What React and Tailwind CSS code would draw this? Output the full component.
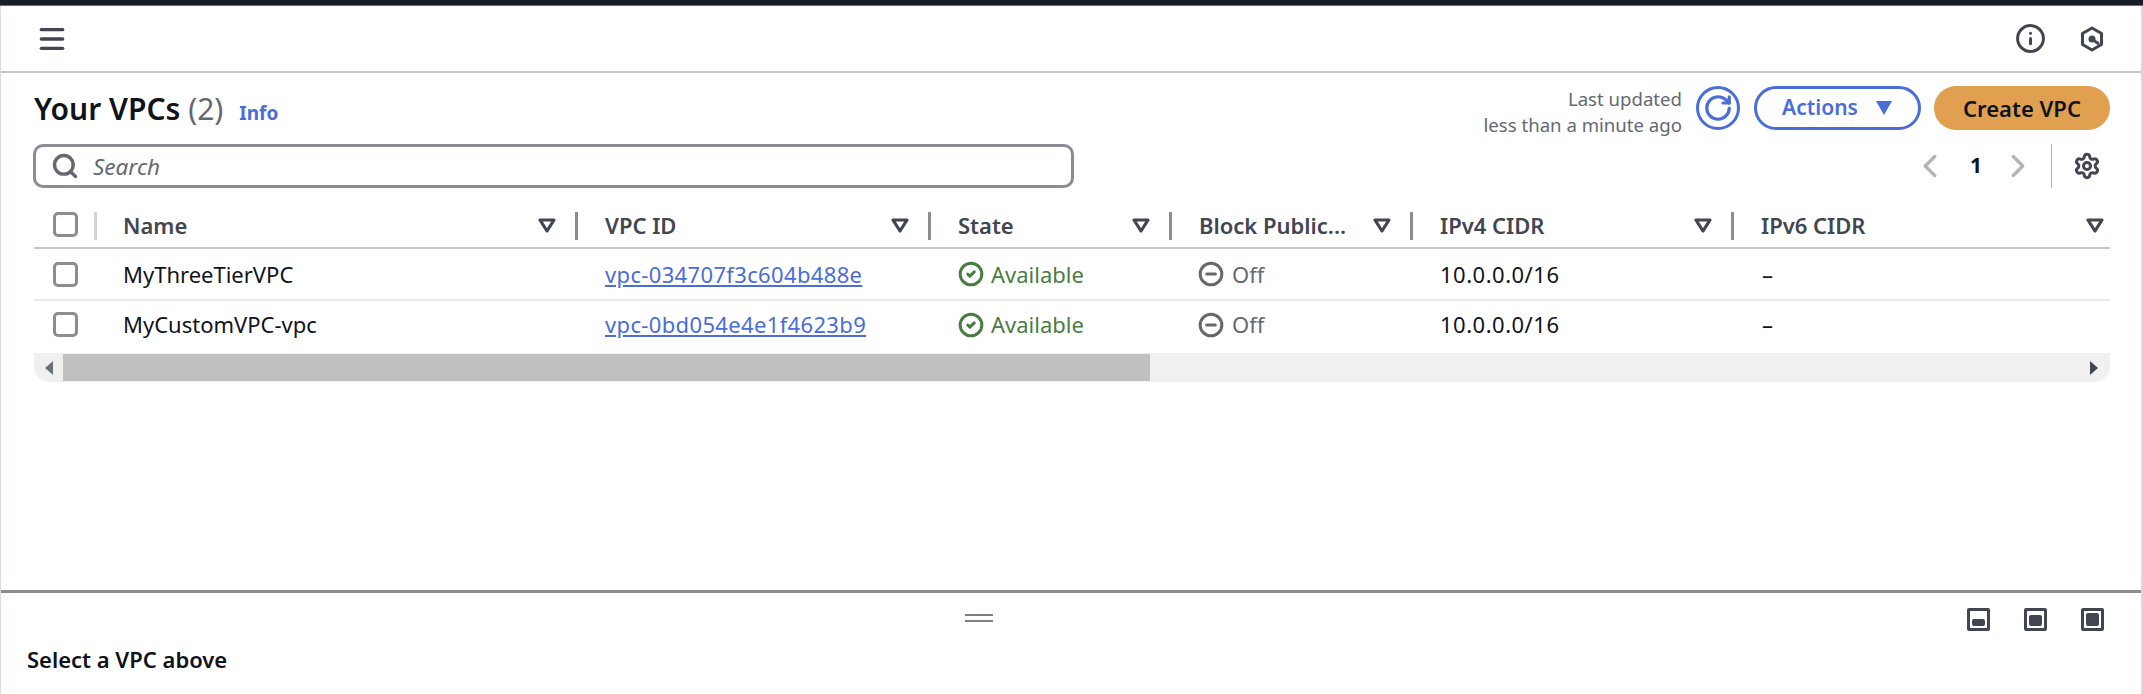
import { Menu, Info, Search, RotateCw, ChevronLeft, ChevronRight, Settings, CircleCheck, CircleMinus } from 'lucide-react';

const columns = ['Name', 'VPC ID', 'State', 'Block Public...', 'IPv4 CIDR', 'IPv6 CIDR'];

const vpcs = [
  { name: 'MyThreeTierVPC', id: 'vpc-034707f3c604b488e' },
  { name: 'MyCustomVPC-vpc', id: 'vpc-0bd054e4e1f4623b9' },
];

const gridCols = 'grid grid-cols-[63px_481px_353px_241px_241px_321px_392px]';

function Checkbox() {
  return <div className="w-[25px] h-[25px] rounded-[5px] border-[3px] border-[#8c8c94] bg-white" />;
}

function SortIcon() {
  return (
    <svg width="18" height="15" viewBox="0 0 18 15" className="shrink-0">
      <path d="M2 2h14L9 13z" fill="none" stroke="#424650" strokeWidth="3.2" strokeLinejoin="round" />
    </svg>
  );
}

function HexIcon() {
  return (
    <svg width="24" height="26" viewBox="0 0 24 26" fill="none">
      <path d="M12 2l9.5 5.5v11L12 24l-9.5-5.5v-11z" stroke="#424650" strokeWidth="3" strokeLinejoin="round" />
      <circle cx="12" cy="13" r="3.5" fill="#424650" />
      <path d="M13 14l6 4" stroke="#424650" strokeWidth="3" />
    </svg>
  );
}

function PanelIcon({ innerClass }) {
  return (
    <div className="w-[23px] h-[23px] rounded-[2px] border-[3px] border-[#424650] flex items-end justify-center p-[2px]">
      <div className={`w-full rounded-[2px] bg-[#424650] ${innerClass}`} />
    </div>
  );
}

export default function App() {
  return (
    <div className="w-[2143px] h-[694px] flex flex-col overflow-hidden bg-white text-[#0f141a] font-['Noto_Sans',sans-serif]">
      <div className="h-[6px] shrink-0 bg-[#161d26] border-b border-[#6b6f78]" />

      <div className="flex-1 flex flex-col min-h-0 border-l border-l-[#d5dbe5] border-r-[2px] border-r-[#d5dbe5]">
        {/* Top bar */}
        <div className="h-[67px] shrink-0 flex items-center justify-between pl-[35px] pr-[37px] border-b-[2px] border-[#c6c6cd]">
          <Menu size={32} color="#424650" strokeWidth={3.4} absoluteStrokeWidth />
          <div className="flex items-center gap-[34px]">
            <Info size={31} color="#424650" strokeWidth={3} absoluteStrokeWidth />
            <HexIcon />
          </div>
        </div>

        {/* VPC list */}
        <div className="flex-1 min-h-0 pl-[33px] pr-[31px]">
          <div className="flex justify-between h-[71px] pt-[13px]">
            <div className="flex items-baseline pt-[5px]">
              <h1 className="text-[30px] leading-[36px] font-semibold">Your VPCs <span className="font-normal text-[#656871]">(2)</span></h1>
              <a className="ml-[16px] text-[19px] font-bold text-[#4a6dd8]">Info</a>
            </div>
            <div className="flex items-start">
              <div className="text-right text-[18.6px] leading-[26px] text-[#656871] mr-[14px]">
                <div>Last updated</div>
                <div>less than a minute ago</div>
              </div>
              <button className="w-[44px] h-[44px] rounded-full border-[3px] border-[#4a6dd8] flex items-center justify-center text-[#4a6dd8]">
                <RotateCw size={30} strokeWidth={3.2} absoluteStrokeWidth />
              </button>
              <button className="ml-[14px] w-[167px] h-[44px] rounded-full border-[3px] border-[#4a6dd8] flex items-center justify-center gap-[17px] text-[21px] font-semibold text-[#4a6dd8]">
                Actions
                <svg width="18" height="16" viewBox="0 0 18 16"><path d="M1 1h16L9 15z" fill="#4a6dd8" /></svg>
              </button>
              <button className="ml-[13px] w-[176px] h-[44px] rounded-full bg-[#e0a04f] flex items-center justify-center text-[22px] font-semibold">
                Create VPC
              </button>
            </div>
          </div>

          <div className="flex justify-between items-center h-[44px]">
            <div className="-ml-px w-[1041px] h-[44px] rounded-[10px] border-[3px] border-[#8c8c94] flex items-center pl-[15px] gap-[14px]">
              <Search size={28} color="#656871" strokeWidth={3.4} absoluteStrokeWidth />
              <span className="pt-[1px] text-[22.5px] italic text-[#656871]">Search</span>
            </div>
            <div className="flex items-center h-[44px]">
              <ChevronLeft size={38} color="#b4b4bb" strokeWidth={3.4} absoluteStrokeWidth />
              <span className="w-[50px] pl-[4px] text-center text-[21px] font-bold">1</span>
              <ChevronRight size={38} color="#b4b4bb" strokeWidth={3.4} absoluteStrokeWidth />
              <div className="ml-[14px] w-[1px] h-[44px] bg-[#b4b4bb]" />
              <Settings size={28} color="#424650" strokeWidth={3} absoluteStrokeWidth className="ml-[21px] mr-[9px]" />
            </div>
          </div>

          {/* Table */}
          <div className="mt-[17px] w-[2076px] overflow-hidden">
            <div className={`${gridCols} h-[44px] border-b-[2px] border-[#c6c6cd]`}>
              <div className="flex items-center pl-[19px] pb-[3px] relative">
                <Checkbox />
                <div className="absolute right-0 top-[7px] w-[3px] h-[28px] bg-[#d4d4d8]" />
              </div>
              {columns.map((col, i) => (
                <div key={col} className={`flex items-center justify-between pr-[22px] pb-[2px] relative ${i === 0 ? 'pl-[26px]' : 'pl-[27px]'}`}>
                  <span className="text-[22px] font-semibold text-[#424650] whitespace-nowrap">{col}</span>
                  <SortIcon />
                  {i < 5 && <div className="absolute right-0 top-[7px] w-[3px] h-[28px] bg-[#8c8c94]" />}
                </div>
              ))}
            </div>

            {vpcs.map((vpc, i) => (
              <div key={vpc.id} className={`${gridCols} h-[52px] text-[22px] ${i === 0 ? 'border-b-[2px] border-[#e9ebed]' : 'pb-[5px]'}`}>
                <div className="flex items-center pl-[19px]"><Checkbox /></div>
                <div className="flex items-center pl-[26px]">{vpc.name}</div>
                <div className="flex items-center pl-[27px]"><a className="underline text-[#4a6dd8] tracking-[0.35px]">{vpc.id}</a></div>
                <div className="flex items-center pl-[27px] gap-[7px] text-[#4a7c3f]">
                  <CircleCheck size={26} strokeWidth={3} absoluteStrokeWidth />
                  Available
                </div>
                <div className="flex items-center pl-[26px] gap-[8px] text-[#656871]">
                  <CircleMinus size={26} strokeWidth={3} absoluteStrokeWidth />
                  Off
                </div>
                <div className="flex items-center pl-[27px] tracking-[0.5px]">10.0.0.0/16</div>
                <div className="flex items-center pl-[28px]">–</div>
              </div>
            ))}

            {/* Horizontal scrollbar */}
            <div className="h-[29px] bg-[#f0f0f0] rounded-b-[16px] flex items-center overflow-hidden">
              <div className="w-[29px] flex justify-center shrink-0">
                <svg width="8" height="14" viewBox="0 0 8 14"><path d="M8 0v14L0 7z" fill="#6b6f78" /></svg>
              </div>
              <div className="w-[1087px] h-[27px] bg-[#c0c0c0] shrink-0" />
              <div className="flex-1 flex justify-end pr-[12px]">
                <svg width="8" height="14" viewBox="0 0 8 14"><path d="M0 0v14l8-7z" fill="#424650" /></svg>
              </div>
            </div>
          </div>
        </div>

        {/* Split panel */}
        <div className="h-[104px] shrink-0 border-t-[3px] border-[#8c8c94] pl-[26px] pr-[37px] relative">
          <div className="absolute left-[964px] top-[21px] w-[28px] h-[8px] border-y-[2px] border-[#7d8088]" />
          <div className="flex justify-end gap-[34px] pt-[15px]">
            <PanelIcon innerClass="h-[7px]" />
            <PanelIcon innerClass="h-[11px]" />
            <PanelIcon innerClass="h-full" />
          </div>
          <div className="mt-[14px] text-[22px] leading-[28px] font-semibold">Select a VPC above</div>
        </div>
      </div>
    </div>
  );
}
